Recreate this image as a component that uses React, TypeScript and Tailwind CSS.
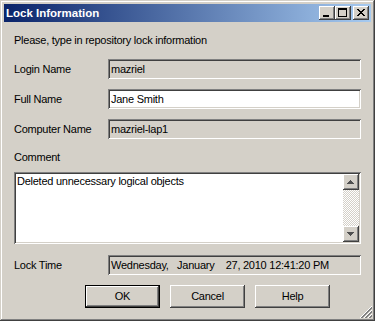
import React from "react";

const raised =
  "shadow-[inset_-1px_-1px_0_#404040,inset_1px_1px_0_#ffffff,inset_-2px_-2px_0_#808080,inset_2px_2px_0_#d4d0c8]";
const sunken =
  "shadow-[inset_1px_1px_0_#808080,inset_-1px_-1px_0_#ffffff,inset_2px_2px_0_#404040,inset_-2px_-2px_0_#d4d0c8]";

function Px({ cells, color }: { cells: [number, number][]; color: string }) {
  return (
    <>
      {cells.map(([x, y], i) => (
        <rect key={i} x={x} y={y} width={1} height={1} fill={color} />
      ))}
    </>
  );
}

const closeCells: [number, number][] = (() => {
  const rows = ["XX....XX", ".XX..XX.", "..XXXX..", "...XX...", "..XXXX..", ".XX..XX.", "XX....XX"];
  const out: [number, number][] = [];
  rows.forEach((r, y) => r.split("").forEach((c, x) => c === "X" && out.push([x, y])));
  return out;
})();

function TitleButton({ kind, className = "" }: { kind: "min" | "max" | "close"; className?: string }) {
  return (
    <div className={`w-[16px] h-[14px] bg-[#d4d0c8] relative ${raised} ${className}`}>
      <svg width="16" height="14" className="absolute left-0 top-0" shapeRendering="crispEdges">
        {kind === "min" && <rect x={4} y={9} width={6} height={2} fill="#000" />}
        {kind === "max" && (
          <>
            <rect x={3} y={2} width={9} height={2} fill="#000" />
            <rect x={3} y={2} width={1} height={9} fill="#000" />
            <rect x={11} y={2} width={1} height={9} fill="#000" />
            <rect x={3} y={10} width={9} height={1} fill="#000" />
          </>
        )}
        {kind === "close" && (
          <g transform="translate(4,3)">
            <Px cells={closeCells} color="#000" />
          </g>
        )}
      </svg>
    </div>
  );
}

function Field({ value, white = false }: { value: string; white?: boolean }) {
  return (
    <div
      className={`w-[253px] h-[20px] flex items-center pl-[3px] pr-[2px] ${white ? "bg-white" : "bg-[#d4d0c8]"} ${sunken}`}
    >
      <span className="whitespace-pre text-black leading-[13px]">{value}</span>
    </div>
  );
}

function Row({ label, children, className = "" }: { label: string; children: React.ReactNode; className?: string }) {
  return (
    <div className={`flex items-center h-[20px] ${className}`}>
      <div className="w-[94px] leading-[13px]">{label}</div>
      {children}
    </div>
  );
}

function Arrow({ up }: { up: boolean }) {
  const rows = up ? [0, 1, 2, 3] : [3, 2, 1, 0];
  return (
    <div className={`w-[16px] h-[16px] bg-[#d4d0c8] relative ${raised}`}>
      <svg width="16" height="16" className="absolute left-0 top-0" shapeRendering="crispEdges">
        {rows.map((w, i) => (
          <rect key={i} x={7 - w} y={6 + i} width={w * 2 + 1} height={1} fill="#505050" />
        ))}
      </svg>
    </div>
  );
}

function Btn({ label, def = false }: { label: string; def?: boolean }) {
  return (
    <div className={`w-[75px] h-[23px] ${def ? "border border-black" : ""}`}>
      <div className={`w-full h-full bg-[#d4d0c8] flex items-center justify-center ${raised}`}>
        <span className="leading-[13px]">{label}</span>
      </div>
    </div>
  );
}

export default function App() {
  return (
    <div
      className="w-[375px] h-[321px] bg-[#d4d0c8] p-[4px] flex flex-col relative text-[11px] tracking-[-0.25px] text-black shadow-[inset_-1px_-1px_0_#404040,inset_1px_1px_0_#d4d0c8,inset_-2px_-2px_0_#808080,inset_2px_2px_0_#ffffff]"
      style={{ fontFamily: '"Liberation Sans", Arial, sans-serif' }}
    >
      <div className="h-[18px] flex items-center pl-[2px] pr-[2px] bg-[linear-gradient(to_right,#0a246a,#a6caf0)]">
        <span className="text-white font-bold text-[11.5px] tracking-normal leading-[14px] flex-1">Lock Information</span>
        <TitleButton kind="min" />
        <TitleButton kind="max" />
        <TitleButton kind="close" className="ml-[2px]" />
      </div>
      <div className="flex flex-col px-[10px]">
        <div className="mt-[12px] leading-[13px]">Please, type in repository lock information</div>
        <Row label="Login Name" className="mt-[12px]">
          <Field value="mazriel" />
        </Row>
        <Row label="Full Name" className="mt-[10px]">
          <Field value="Jane Smith" white />
        </Row>
        <Row label="Computer Name" className="mt-[10px]">
          <Field value="mazriel-lap1" />
        </Row>
        <div className="mt-[12px] leading-[13px]">Comment</div>
        <div className={`mt-[8px] w-[347px] h-[72px] bg-white flex p-[2px] ${sunken}`}>
          <div className="flex-1 pl-[1px] pt-[1px] leading-[13px]">Deleted unnecessary logical objects</div>
          <div className="w-[16px] flex flex-col">
            <Arrow up />
            <div className="flex-1 bg-[repeating-conic-gradient(#ffffff_0_25%,#d4d0c8_0_50%)] bg-[length:2px_2px]" />
            <Arrow up={false} />
          </div>
        </div>
        <Row label="Lock Time" className="mt-[11px]">
          <Field value="Wednesday,   January    27, 2010 12:41:20 PM" />
        </Row>
        <div className="flex gap-[10px] pl-[71px] mt-[10px]">
          <Btn label="OK" def />
          <Btn label="Cancel" />
          <Btn label="Help" />
        </div>
      </div>
      <svg width="12" height="12" className="absolute right-[3px] bottom-[3px]" shapeRendering="crispEdges">
        {[0, 4, 8].map((o) =>
          Array.from({ length: 12 - o }).map((_, i) => (
            <React.Fragment key={`${o}-${i}`}>
              <rect x={o + i} y={11 - i} width={1} height={1} fill="#ffffff" />
              <rect x={o + i + 1} y={11 - i} width={1} height={1} fill="#808080" />
              <rect x={o + i + 2} y={11 - i} width={1} height={1} fill="#808080" />
            </React.Fragment>
          ))
        )}
      </svg>
    </div>
  );
}
